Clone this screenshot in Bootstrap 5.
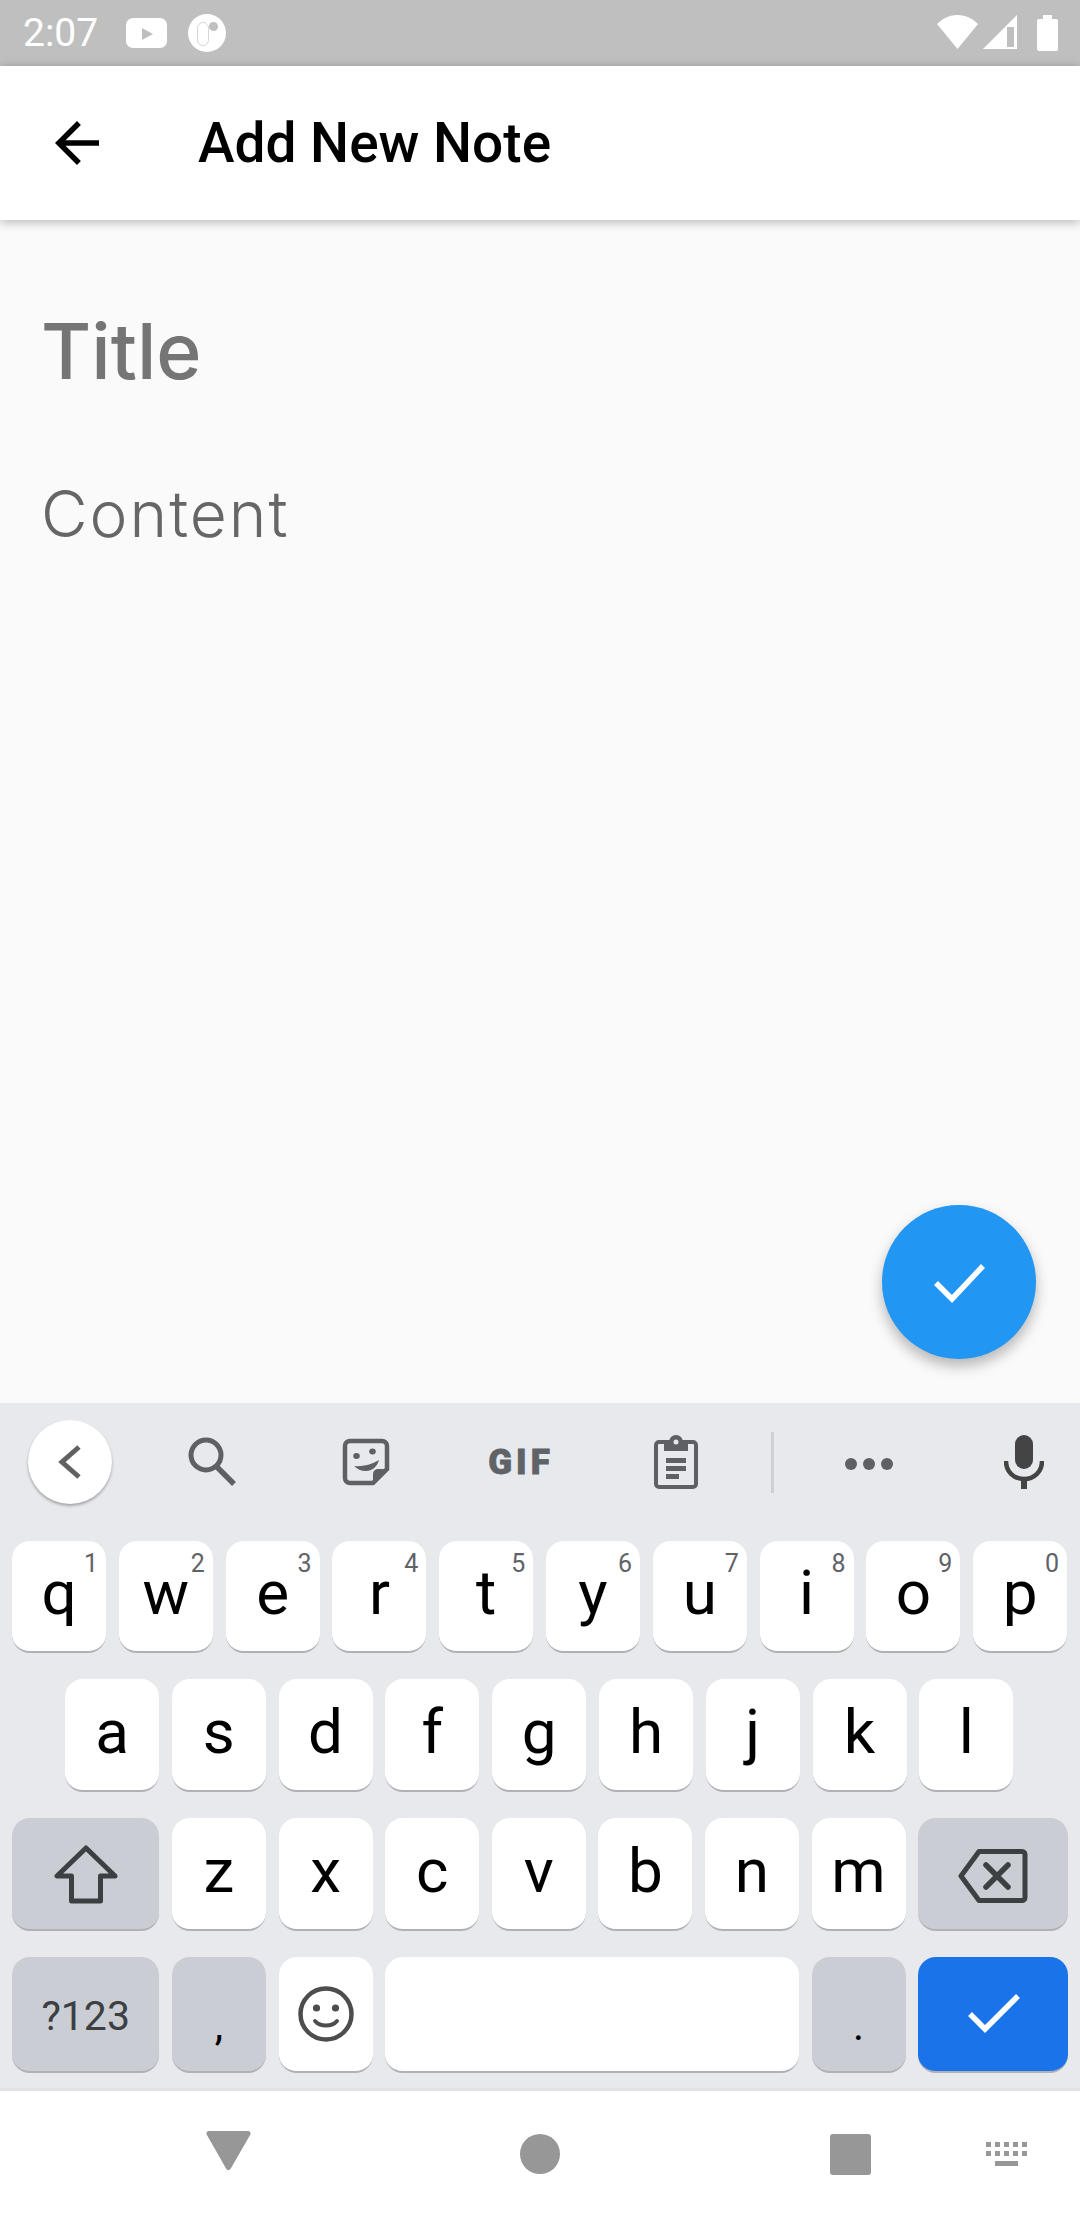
<!DOCTYPE html>
<html lang="en">
<head>
    <meta charset="UTF-8">
    <meta name="viewport" content="width=device-width, initial-scale=1.0">
    <title>Add New Note</title>
    <link href="https://cdn.jsdelivr.net/npm/bootstrap@5.3.0/dist/css/bootstrap.min.css" rel="stylesheet">
    <style>
        body { font-family: Roboto, "Liberation Sans", sans-serif; background: #fafafa; }
        .screen { width: 1080px; height: 2220px; overflow: hidden; }
        svg { display: block; flex-shrink: 0; }

        /* status bar */
        .status-bar { height: 66px; background: #bfbfbf; color: #fff; padding-left: 23px; }
        .status-time { width: 103px; font-size: 39px; line-height: 1; }
        .status-app { margin-left: 21px; }
        .status-right { margin-left: auto; margin-right: 21px; }

        /* app bar */
        .app-bar { height: 154px; background: #fff; box-shadow: 0 2px 10px rgba(0, 0, 0, .28); z-index: 2; }
        .app-back { margin-left: 44px; margin-right: 88px; }
        .app-title { font-size: 55px; font-weight: 500; color: #000; line-height: 1; }

        /* note form */
        .note-area { background: #fafafa; padding: 86px 41px 0; }
        .note-title { font-family: Inter, "Noto Sans", sans-serif; font-size: 77px; font-weight: 500; color: #757575; line-height: 90px; }
        .note-content { font-family: Inter, "Noto Sans", sans-serif; font-size: 64px; font-weight: 300; letter-spacing: 2px; color: #666; line-height: 70px; margin-top: 83px; }
        .fab-save { right: 44px; bottom: 44px; width: 154px; height: 154px; background: #2196f3; box-shadow: 0 7px 14px rgba(0, 0, 0, .28); }

        /* keyboard */
        .kb { height: 685px; background: #e8e9ed; flex-shrink: 0; }
        .kb-tools { height: 118px; margin-bottom: 20px; }
        .kb-slot { height: 118px; flex-shrink: 0; }
        .slot-back { width: 140px; }
        .slot-search { width: 144px; }
        .slot-sticker { width: 164px; }
        .slot-gif { width: 142px; }
        .slot-clip { width: 172px; }
        .slot-more { width: 184px; }
        .slot-mic { width: 100px; margin-left: 13px; }
        .kb-back { width: 84px; height: 84px; background: #fff; box-shadow: 0 2px 3px rgba(0, 0, 0, .3); }
        .kb-gif { font-size: 35px; font-weight: 900; letter-spacing: 4px; padding-left: 4px; color: #5f6368; line-height: 1; -webkit-text-stroke: .8px #5f6368; }
        .kb-divider { width: 3px; height: 61px; margin: 0 3px 0 9px; background: #cfd0d5; flex-shrink: 0; }
        .kb-row { padding: 0 12px; gap: 12.8px; margin-bottom: 26px; }
        .kb-row-inset { padding-left: 65px; }
        .kb-row-tight { gap: 12.6px; }
        .kb-row-1 .kb-key { height: 112px; }
        .kb-row-2 .kb-key, .kb-row-3 .kb-key { height: 113px; }
        .kb-row-4 .kb-key { height: 116px; }
        .kb-key { width: 94px; flex-shrink: 0; background: #fff; border-radius: 18px; border-bottom: 2px solid #b0b1b4; color: #000; font-size: 62px; line-height: 1; padding-bottom: 6px; }
        .kb-key-wide { width: 147.4px; }
        .kb-key-last { width: 150px; }
        .kb-key-space { width: 413.8px; }
        .kb-key-dark { background: #cacdd4; }
        .kb-key-go { background: #1a73e8; }
        .kb-key-icon { padding-bottom: 0; }
        .kb-key-sym { font-size: 41px; color: #3c4043; padding: 5px 0 0; }
        .kb-key-punct { font-size: 42px; padding-bottom: 24px; }
        .kb-hint { top: 10px; right: 8px; font-size: 25px; line-height: 1; color: #5f6368; }

        /* navigation bar */
        .nav-bar { height: 132px; background: #fff; border-top: 3px solid #e2e2e2; padding: 0 0 3px 206px; flex-shrink: 0; }
        .nav-back { margin-top: -6px; }
        .nav-home { margin-left: 269px; }
        .nav-recent { margin-left: 270px; }
        .nav-ime { margin-left: 115px; }
    </style>
</head>
<body>
    <div class="screen d-flex flex-column">
        <!-- Status bar -->
        <div class="status-bar d-flex align-items-center flex-shrink-0">
            <div class="status-time">2:07</div>
            <svg width="41" height="30" viewBox="0 0 41 30"><rect width="41" height="30" rx="7" fill="#fff"/><path d="M16 10l11 6-11 6z" fill="#bfbfbf"/></svg>
            <svg class="status-app" width="38" height="38" viewBox="0 0 38 38"><circle cx="19" cy="19" r="19" fill="#fff"/><rect x="9.500" y="8.500" width="11" height="23" rx="5.500" fill="#fff" stroke="#d6d6d6"/><circle cx="25.500" cy="12.500" r="4.500" fill="#bfbfbf"/></svg>
            <svg class="status-right" width="122" height="40" viewBox="0 0 122 40">
                <path d="M0 11C12-1 29-1 41 11L20.500 36z" fill="#fff"/>
                <path d="M46 36L80 2v34z" fill="#fff"/>
                <path d="M70 14h7v20h-7z" fill="#bfbfbf"/>
                <path d="M106 2h9v4h4a2 2 0 0 1 2 2v28a2 2 0 0 1-2 2h-17a2 2 0 0 1-2-2V8a2 2 0 0 1 2-2h4z" fill="#fff"/>
            </svg>
        </div>

        <!-- App bar -->
        <div class="app-bar d-flex align-items-center flex-shrink-0">
            <svg class="app-back" width="66" height="66" viewBox="0 0 24 24"><path d="M20 11H7.830l5.590-5.590L12 4l-8 8 8 8 1.410-1.410L7.830 13H20v-2z" fill="#000"/></svg>
            <div class="app-title">Add New Note</div>
        </div>

        <!-- Note -->
        <div class="note-area flex-grow-1 position-relative">
            <div class="note-title">Title</div>
            <div class="note-content">Content</div>
            <button type="button" class="fab-save btn rounded-circle border-0 p-0 position-absolute d-flex align-items-center justify-content-center">
                <svg width="64" height="50" viewBox="0 0 64 50"><path d="M9 26l16 16L56 9" fill="none" stroke="#fff" stroke-width="5.500"/></svg>
            </button>
        </div>

        <!-- Keyboard -->
        <div class="kb">
            <div class="kb-tools d-flex align-items-center">
                <div class="kb-slot slot-back d-flex align-items-center justify-content-center">
                    <div class="kb-back rounded-circle d-flex align-items-center justify-content-center">
                        <svg width="30" height="40" viewBox="0 0 30 40"><path d="M24 5L7 20l17 15" fill="none" stroke="#616161" stroke-width="5"/></svg>
                    </div>
                </div>
                <div class="kb-slot slot-search d-flex align-items-center justify-content-center">
                    <svg width="50" height="52" viewBox="0 0 50 52"><circle cx="19" cy="19" r="15" fill="none" stroke="#5f6064" stroke-width="5"/><path d="M29 30l18 18" stroke="#5f6064" stroke-width="5.500"/></svg>
                </div>
                <div class="kb-slot slot-sticker d-flex align-items-center justify-content-center">
                    <svg width="48" height="48" viewBox="0 0 48 48">
                        <path d="M8 3h32a5 5 0 0 1 5 5v23L31 45H8a5 5 0 0 1-5-5V8a5 5 0 0 1 5-5z" fill="none" stroke="#5f6064" stroke-width="4.500"/>
                        <path d="M45 31H36a5 5 0 0 0-5 5v9z" fill="#5f6064"/>
                        <ellipse cx="14.500" cy="18" rx="3.300" ry="3" fill="#5f6064"/>
                        <ellipse cx="30.500" cy="13.500" rx="3.300" ry="3" fill="#5f6064"/>
                        <path d="M12 28c7 1 17-1 25-6-2 7-7 11-13 11-5 0-9-2-12-5z" fill="#5f6064"/>
                    </svg>
                </div>
                <div class="kb-slot slot-gif d-flex align-items-center justify-content-center">
                    <span class="kb-gif">GIF</span>
                </div>
                <div class="kb-slot slot-clip d-flex align-items-center justify-content-center">
                    <svg width="44" height="54" viewBox="0 0 44 54">
                        <path d="M5 7h34a3 3 0 0 1 3 3v39a3 3 0 0 1-3 3H5a3 3 0 0 1-3-3V10a3 3 0 0 1 3-3z" fill="none" stroke="#5f6064" stroke-width="4"/>
                        <path d="M10 7h5a7 7 0 0 1 14 0h5v9H10z" fill="#5f6064"/>
                        <circle cx="22" cy="7" r="2.500" fill="#e8e9ed"/>
                        <path d="M12 23h20v5H12zM12 31h20v5H12zM12 39h13v5H12z" fill="#5f6064"/>
                    </svg>
                </div>
                <div class="kb-divider"></div>
                <div class="kb-slot slot-more d-flex align-items-center justify-content-center">
                    <svg width="48" height="16" viewBox="0 0 48 16"><circle cx="6" cy="10" r="6" fill="#5f6064"/><circle cx="24" cy="10" r="6" fill="#5f6064"/><circle cx="42" cy="10" r="6" fill="#5f6064"/></svg>
                </div>
                <div class="kb-slot slot-mic d-flex align-items-center justify-content-center">
                    <svg width="40" height="54" viewBox="0 0 40 54"><rect x="11" y="0" width="18" height="34" rx="9" fill="#444"/><path d="M2 26c0 11 8 18 18 18s18-7 18-18" fill="none" stroke="#444" stroke-width="4.500"/><path d="M17 42h6v12h-6z" fill="#444"/></svg>
                </div>
            </div>

            <div class="kb-row kb-row-1 d-flex">
                <div class="kb-key d-flex align-items-center justify-content-center position-relative">q<span class="kb-hint position-absolute">1</span></div>
                <div class="kb-key d-flex align-items-center justify-content-center position-relative">w<span class="kb-hint position-absolute">2</span></div>
                <div class="kb-key d-flex align-items-center justify-content-center position-relative">e<span class="kb-hint position-absolute">3</span></div>
                <div class="kb-key d-flex align-items-center justify-content-center position-relative">r<span class="kb-hint position-absolute">4</span></div>
                <div class="kb-key d-flex align-items-center justify-content-center position-relative">t<span class="kb-hint position-absolute">5</span></div>
                <div class="kb-key d-flex align-items-center justify-content-center position-relative">y<span class="kb-hint position-absolute">6</span></div>
                <div class="kb-key d-flex align-items-center justify-content-center position-relative">u<span class="kb-hint position-absolute">7</span></div>
                <div class="kb-key d-flex align-items-center justify-content-center position-relative">i<span class="kb-hint position-absolute">8</span></div>
                <div class="kb-key d-flex align-items-center justify-content-center position-relative">o<span class="kb-hint position-absolute">9</span></div>
                <div class="kb-key d-flex align-items-center justify-content-center position-relative">p<span class="kb-hint position-absolute">0</span></div>
            </div>
            <div class="kb-row kb-row-2 kb-row-inset d-flex">
                <div class="kb-key d-flex align-items-center justify-content-center">a</div>
                <div class="kb-key d-flex align-items-center justify-content-center">s</div>
                <div class="kb-key d-flex align-items-center justify-content-center">d</div>
                <div class="kb-key d-flex align-items-center justify-content-center">f</div>
                <div class="kb-key d-flex align-items-center justify-content-center">g</div>
                <div class="kb-key d-flex align-items-center justify-content-center">h</div>
                <div class="kb-key d-flex align-items-center justify-content-center">j</div>
                <div class="kb-key d-flex align-items-center justify-content-center">k</div>
                <div class="kb-key d-flex align-items-center justify-content-center">l</div>
            </div>
            <div class="kb-row kb-row-3 kb-row-tight d-flex">
                <div class="kb-key kb-key-wide kb-key-dark kb-key-icon d-flex align-items-center justify-content-center">
                    <svg width="64" height="62" viewBox="0 0 64 62"><path d="M32 5L3 33h14.500v25h29V33H61z" fill="none" stroke="#3c4043" stroke-width="5" stroke-linejoin="round"/></svg>
                </div>
                <div class="kb-key d-flex align-items-center justify-content-center">z</div>
                <div class="kb-key d-flex align-items-center justify-content-center">x</div>
                <div class="kb-key d-flex align-items-center justify-content-center">c</div>
                <div class="kb-key d-flex align-items-center justify-content-center">v</div>
                <div class="kb-key d-flex align-items-center justify-content-center">b</div>
                <div class="kb-key d-flex align-items-center justify-content-center">n</div>
                <div class="kb-key d-flex align-items-center justify-content-center">m</div>
                <div class="kb-key kb-key-last kb-key-dark kb-key-icon d-flex align-items-center justify-content-center">
                    <svg width="72" height="62" viewBox="0 0 72 62"><path d="M4 33L22 8.500h43a3 3 0 0 1 3 3v43a3 3 0 0 1-3 3H22z" fill="none" stroke="#3c4043" stroke-width="5" stroke-linejoin="round"/><path d="M29 22l22 22M51 22L29 44" stroke="#3c4043" stroke-width="5.500" stroke-linecap="round"/></svg>
                </div>
            </div>
            <div class="kb-row kb-row-4 kb-row-tight d-flex mb-0">
                <div class="kb-key kb-key-wide kb-key-dark kb-key-sym d-flex align-items-center justify-content-center">?123</div>
                <div class="kb-key kb-key-dark kb-key-punct d-flex align-items-end justify-content-center">,</div>
                <div class="kb-key kb-key-icon d-flex align-items-center justify-content-center">
                    <svg width="58" height="58" viewBox="0 0 58 58"><circle cx="29" cy="29" r="25.500" fill="none" stroke="#4d4d4d" stroke-width="4.500"/><circle cx="19.500" cy="23" r="3.600" fill="#4d4d4d"/><circle cx="38.500" cy="23" r="3.600" fill="#4d4d4d"/><path d="M18 36c5 6 17 6 22 0" fill="none" stroke="#4d4d4d" stroke-width="4" stroke-linecap="round"/></svg>
                </div>
                <div class="kb-key kb-key-space"></div>
                <div class="kb-key kb-key-dark kb-key-punct d-flex align-items-end justify-content-center">.</div>
                <div class="kb-key kb-key-last kb-key-go kb-key-icon d-flex align-items-center justify-content-center">
                    <svg width="56" height="44" viewBox="0 0 56 44"><path d="M5 22l15 15L53 4" fill="none" stroke="#fff" stroke-width="5.500"/></svg>
                </div>
            </div>
        </div>

        <!-- Navigation bar -->
        <div class="nav-bar d-flex align-items-center">
            <svg class="nav-back" width="45" height="40" viewBox="0 0 45 40"><path d="M3 0h39a2.500 2.500 0 0 1 2.200 3.800L24.500 38a2.500 2.500 0 0 1-4.200 0L.8 3.800A2.500 2.500 0 0 1 3 0z" fill="#979797"/></svg>
            <svg class="nav-home" width="40" height="40" viewBox="0 0 40 40"><circle cx="20" cy="20" r="20" fill="#979797"/></svg>
            <svg class="nav-recent" width="41" height="41" viewBox="0 0 41 41"><rect width="41" height="41" rx="3" fill="#979797"/></svg>
            <svg class="nav-ime" width="42" height="24" viewBox="0 0 42 24"><path d="M0 0h5v5H0zM9 0h5v5H9zM18 0h5v5h-5zM27 0h5v5h-5zM36 0h5v5h-5zM0 9h5v5H0zM9 9h5v5H9zM18 9h5v5h-5zM27 9h5v5h-5zM36 9h5v5h-5zM9 19h23v5H9z" fill="#979797"/></svg>
        </div>
    </div>
</body>
</html>
